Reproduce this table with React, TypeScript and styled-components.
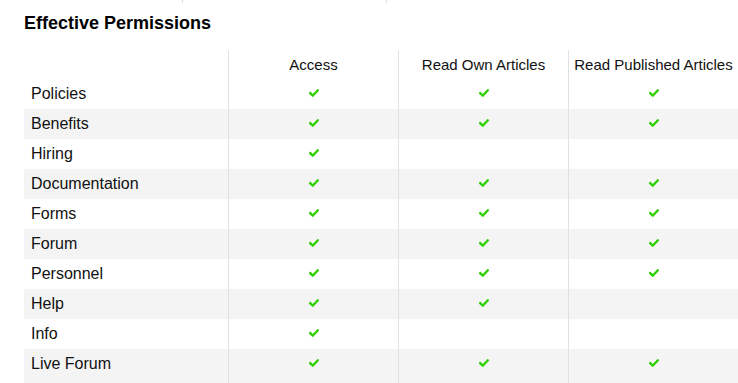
import styled, { createGlobalStyle } from "styled-components";

const COLUMNS = ["Access", "Read Own Articles", "Read Published Articles"];

type Row = {
  name: string;
  perms: [boolean, boolean, boolean];
};

const ROWS: Row[] = [
  { name: "Policies", perms: [true, true, true] },
  { name: "Benefits", perms: [true, true, true] },
  { name: "Hiring", perms: [true, false, false] },
  { name: "Documentation", perms: [true, true, true] },
  { name: "Forms", perms: [true, true, true] },
  { name: "Forum", perms: [true, true, true] },
  { name: "Personnel", perms: [true, true, true] },
  { name: "Help", perms: [true, true, false] },
  { name: "Info", perms: [true, false, false] },
  { name: "Live Forum", perms: [true, true, true] },
];

const GlobalStyle = createGlobalStyle`
  body {
    margin: 0;
    background: #fff;
    font-family: "Liberation Sans", Arial, Helvetica, sans-serif;
    color: #111;
    overflow: hidden;
  }
`;

const Check = () => (
  <svg width="10" height="8" viewBox="0 0 10 8">
    <path
      d="M1.2 4.2 L3.8 6.6 L8.8 1.4"
      fill="none"
      stroke="#2fd000"
      strokeWidth="2.3"
      strokeLinecap="square"
    />
  </svg>
);

const App = () => {
  return (
    <>
      <GlobalStyle />
      <Page>
        <TopEdge>
          <EdgeTick offset={182} />
          <EdgeTick offset={203} />
        </TopEdge>
        <Title>Effective Permissions</Title>
        <Table>
          <HeaderRow>
            <NameCell />
            {COLUMNS.map((c) => (
              <HeadCell key={c}>{c}</HeadCell>
            ))}
          </HeaderRow>
          {ROWS.map((row, i) => (
            <BodyRow
              key={row.name}
              $striped={i % 2 === 1}
              $last={i === ROWS.length - 1}
            >
              <NameCell>{row.name}</NameCell>
              {row.perms.map((p, j) => (
                <PermCell key={j}>{p && <Check />}</PermCell>
              ))}
            </BodyRow>
          ))}
        </Table>
      </Page>
    </>
  );
};

const Page = styled.div`
  padding-left: 24px;
  width: 714px;
`;

const TopEdge = styled.div`
  display: flex;
  height: 3px;
  margin-left: -24px;
`;

const EdgeTick = styled.div<{ offset: number }>`
  width: 1px;
  height: 3px;
  background: #dcdcdc;
  margin-left: ${({ offset }) => offset}px;
`;

const Title = styled.h2`
  margin: 9px 0 0;
  font-size: 18px;
  line-height: 22px;
  font-weight: bold;
  color: #000;
`;

const Table = styled.div`
  margin-top: 16px;
  display: flex;
  flex-direction: column;
`;

const RowBase = styled.div`
  display: grid;
  grid-template-columns: 204px repeat(3, 170px);
`;

const HeaderRow = styled(RowBase)`
  height: 29px;
`;

const BodyRow = styled(RowBase)<{ $striped: boolean; $last: boolean }>`
  height: ${({ $last }) => ($last ? 40 : 30)}px;
  background: ${({ $striped }) => ($striped ? "#f4f4f4" : "#fff")};
`;

const NameCell = styled.div`
  height: 30px;
  display: flex;
  align-items: center;
  padding-left: 7px;
  font-size: 16px;
`;

const ColumnCell = styled.div`
  box-sizing: border-box;
  border-left: 1px solid #e1e1e1;
  display: flex;
  justify-content: center;
`;

const HeadCell = styled(ColumnCell)`
  align-items: center;
  font-size: 15px;
  padding-bottom: 1px;
`;

const PermCell = styled(ColumnCell)`
  align-items: flex-start;
  padding-top: 10px;
  padding-left: 1px;
`;

export default App;
